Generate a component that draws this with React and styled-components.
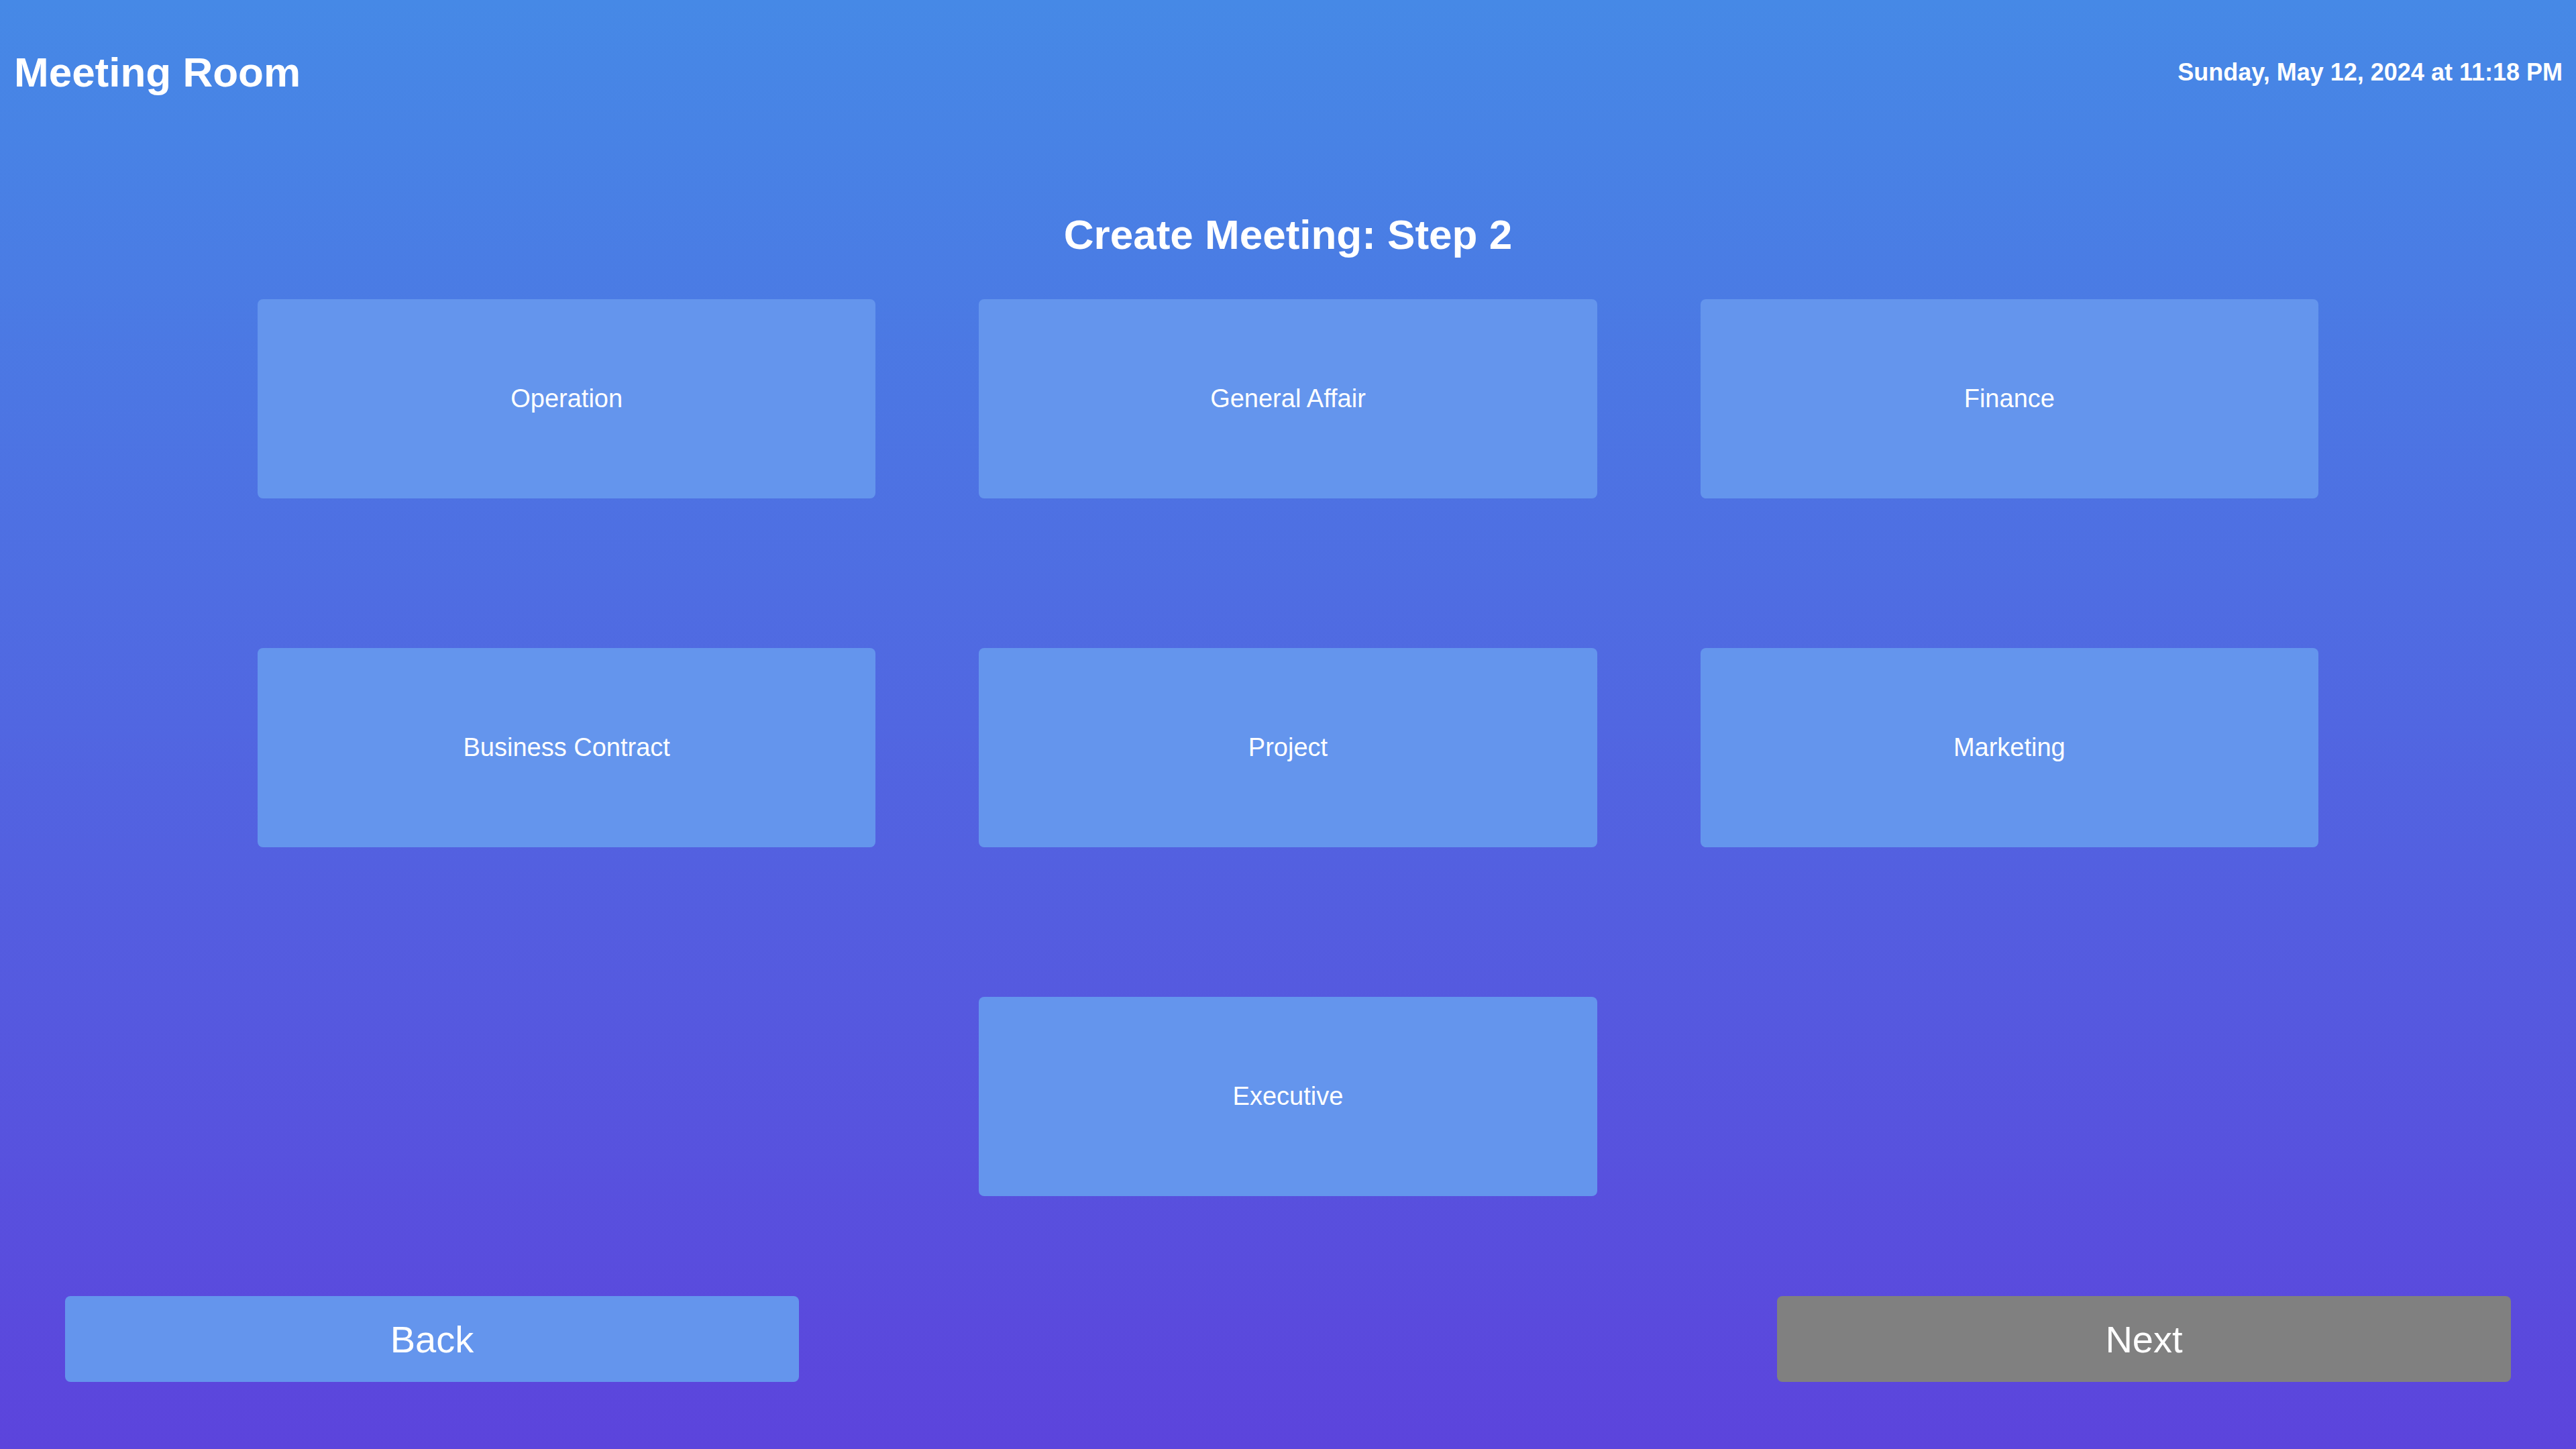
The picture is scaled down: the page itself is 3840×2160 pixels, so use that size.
import React from "react";
import styled, { createGlobalStyle } from "styled-components";

// #region styled-components
const GlobalStyle = createGlobalStyle`
  html, body {
    margin: 0;
    padding: 0;
  }
  body {
    font-family: "Liberation Sans", Arial, sans-serif;
    color: #ffffff;
  }
`;

const Page = styled.div`
  width: 3840px;
  height: 2160px;
  box-sizing: border-box;
  display: flex;
  flex-direction: column;
  background: linear-gradient(to bottom, #4689e6 0%, #5c44dc 100%);
  overflow: hidden;
`;

const Header = styled.header`
  display: flex;
  justify-content: space-between;
  align-items: center;
  padding: 72px 20px 0 21px;
`;

const Brand = styled.h1`
  margin: 0;
  font-size: 62px;
  font-weight: 700;
`;

const Clock = styled.div`
  font-size: 36px;
  font-weight: 700;
`;

const Title = styled.h2`
  margin: 171px 0 0;
  text-align: center;
  font-size: 62px;
  font-weight: 700;
`;

const Grid = styled.div`
  width: 80%;
  margin: 61px auto 0;
  display: grid;
  grid-template-columns: repeat(3, 1fr);
  grid-auto-rows: 297px;
  column-gap: 154px;
  row-gap: 223px;
`;

const Tile = styled.button`
  grid-column: ${(p) => p.$col || "auto"};
  border: none;
  border-radius: 8px;
  background: #6495ed;
  color: #ffffff;
  font-family: inherit;
  font-size: 38px;
  cursor: pointer;
`;

const Footer = styled.footer`
  display: flex;
  justify-content: space-between;
  padding: 0 97px;
  margin-top: 149px;
`;

const NavButton = styled.button`
  width: 1094px;
  height: 128px;
  border: none;
  border-radius: 8px;
  background: ${(p) => (p.$disabled ? "#808080" : "#6495ed")};
  color: #ffffff;
  font-family: inherit;
  font-size: 56px;
  cursor: ${(p) => (p.$disabled ? "default" : "pointer")};
`;
// #endregion

const departments = [
  { id: 1, name: "Operation" },
  { id: 2, name: "General Affair" },
  { id: 3, name: "Finance" },
  { id: 4, name: "Business Contract" },
  { id: 5, name: "Project" },
  { id: 6, name: "Marketing" },
  { id: 7, name: "Executive", col: 2 },
];

const App = () => {
  return (
    <>
      <GlobalStyle />
      <Page>
        <Header>
          <Brand>Meeting Room</Brand>
          <Clock>Sunday, May 12, 2024 at 11:18 PM</Clock>
        </Header>
        <Title>Create Meeting: Step 2</Title>
        <Grid>
          {departments.map((d) => (
            <Tile key={d.id} $col={d.col}>
              {d.name}
            </Tile>
          ))}
        </Grid>
        <Footer>
          <NavButton>Back</NavButton>
          <NavButton $disabled>Next</NavButton>
        </Footer>
      </Page>
    </>
  );
};

export default App;
